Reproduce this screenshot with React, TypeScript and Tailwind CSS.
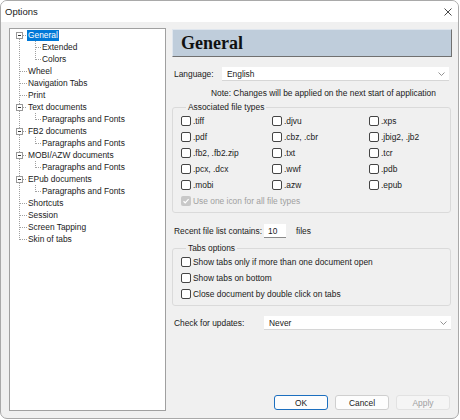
import React from "react";

type Row = { label: string; level: 0 | 1; expand?: boolean; last?: boolean; selected?: boolean };

const TREE: Row[] = [
  { label: "General", level: 0, expand: true, selected: true },
  { label: "Extended", level: 1 },
  { label: "Colors", level: 1, last: true },
  { label: "Wheel", level: 0 },
  { label: "Navigation Tabs", level: 0 },
  { label: "Print", level: 0 },
  { label: "Text documents", level: 0, expand: true },
  { label: "Paragraphs and Fonts", level: 1, last: true },
  { label: "FB2 documents", level: 0, expand: true },
  { label: "Paragraphs and Fonts", level: 1, last: true },
  { label: "MOBI/AZW documents", level: 0, expand: true },
  { label: "Paragraphs and Fonts", level: 1, last: true },
  { label: "EPub documents", level: 0, expand: true },
  { label: "Paragraphs and Fonts", level: 1, last: true },
  { label: "Shortcuts", level: 0 },
  { label: "Session", level: 0 },
  { label: "Screen Tapping", level: 0 },
  { label: "Skin of tabs", level: 0, last: true },
];

const FILE_TYPES = [
  ".tiff", ".djvu", ".xps",
  ".pdf", ".cbz, .cbr", ".jbig2, .jb2",
  ".fb2, .fb2.zip", ".txt", ".tcr",
  ".pcx, .dcx", ".wwf", ".pdb",
  ".mobi", ".azw", ".epub",
];

const DOT = { stroke: "#a0a0a0", strokeWidth: 1, strokeDasharray: "1 1" };

function Gutter({ row, first }: { row: Row; first: boolean }) {
  if (row.level === 1) {
    return (
      <svg width="31" height="12" className="shrink-0">
        <line x1="9.5" y1="0" x2="9.5" y2="12" {...DOT} />
        <line x1="25.5" y1="0" x2="25.5" y2={row.last ? 7 : 12} {...DOT} />
        <line x1="26" y1="6.5" x2="31" y2="6.5" {...DOT} />
      </svg>
    );
  }
  return (
    <svg width="17" height="12" className="shrink-0">
      {row.expand ? (
        <>
          {!first && <line x1="9.5" y1="0" x2="9.5" y2="3" {...DOT} />}
          <line x1="9.5" y1="10" x2="9.5" y2="12" {...DOT} />
          <rect x="6.5" y="3.5" width="6" height="6" fill="#fff" stroke="#999" />
          <line x1="8" y1="6.5" x2="11" y2="6.5" stroke="#333" />
          <line x1="13" y1="6.5" x2="17" y2="6.5" {...DOT} />
        </>
      ) : (
        <>
          <line x1="9.5" y1="0" x2="9.5" y2={row.last ? 7 : 12} {...DOT} />
          <line x1="10" y1="6.5" x2="17" y2="6.5" {...DOT} />
        </>
      )}
    </svg>
  );
}

function Check({ label, disabled, checked }: { label: string; disabled?: boolean; checked?: boolean }) {
  return (
    <div className="flex h-[16px] items-center whitespace-nowrap">
      <span
        className={
          disabled
            ? "flex h-[10px] w-[10px] shrink-0 items-center justify-center rounded-[2px] bg-[#c8c8c8]"
            : "h-[10px] w-[10px] shrink-0 rounded-[2px] border border-[#444] bg-white"
        }
      >
        {checked && (
          <svg width="8" height="8" viewBox="0 0 8 8">
            <path d="M1.5 4.2 L3.2 5.8 L6.6 2.2" fill="none" stroke="#fff" strokeWidth="1.2" />
          </svg>
        )}
      </span>
      <span className={disabled ? "ml-[2px] text-[#a0a0a0]" : "ml-[2px]"}>{label}</span>
    </div>
  );
}

function Select({ value, className }: { value: string; className: string }) {
  return (
    <div className={`flex h-[14px] items-center justify-between border-b border-[#d6d6d6] bg-white pl-[5px] pr-[4px] ${className}`}>
      <span>{value}</span>
      <svg width="7" height="4" viewBox="0 0 7 4">
        <path d="M0.5 0.5 L3.5 3.5 L6.5 0.5" fill="none" stroke="#777" strokeWidth="0.8" />
      </svg>
    </div>
  );
}

function Button({ children, primary, disabled }: { children: string; primary?: boolean; disabled?: boolean }) {
  const cls = primary
    ? "border-[#1c6fbf] bg-[#fdfdfd] text-[#1a1a1a]"
    : disabled
      ? "border-[#e2e2e2] bg-[#f5f5f5] text-[#a0a0a0]"
      : "border-[#cfcfcf] bg-[#fdfdfd] text-[#1a1a1a]";
  return (
    <div className={`flex h-[15px] w-[54px] items-center justify-center rounded-[3px] border ${cls}`}>{children}</div>
  );
}

export default function App() {
  return (
    <div
      className="h-[420px] w-[460px] bg-white text-[8.4px] leading-[12px] text-[#1a1a1a]"
      style={{ fontFamily: '"Liberation Sans", Arial, sans-serif' }}
    >
      <div className="flex h-[419px] w-[459px] flex-col overflow-hidden rounded-[7px] border border-[#a9a9a9] bg-[#f0f0f0]">
        <div className="flex h-[21px] shrink-0 items-center justify-between bg-white pl-[4px] pr-[6px]">
          <span className="text-[9.5px]">Options</span>
          <svg width="8" height="8" viewBox="0 0 8 8" className="mt-[1px]">
            <path d="M0.5 0.5 L7.5 7.5 M7.5 0.5 L0.5 7.5" stroke="#333" strokeWidth="0.9" />
          </svg>
        </div>

        <div className="flex flex-1 gap-[6px] pb-[7px] pl-[8px] pt-[6px]">
          <div className="w-[157px] shrink-0 border border-[#a0a0a0] bg-white">
            {TREE.map((row, i) => (
              <div key={i} className="flex h-[12px] items-center whitespace-nowrap">
                <Gutter row={row} first={i === 0} />
                <span
                  className={
                    row.selected
                      ? "bg-[#0078d7] px-[1px] leading-[11px] text-white"
                      : "px-[1px] leading-[11px]"
                  }
                >
                  {row.label}
                </span>
              </div>
            ))}
          </div>

          <div className="flex w-[280px] flex-col pt-[1px]">
            <div className="flex h-[28px] items-center border border-b-[#707070] border-l-[#dfe6ee] border-r-[#707070] border-t-[#dfe6ee] bg-[#bfcddb] pl-[8px]">
              <span
                className="text-[18px] font-bold text-[#111]"
                style={{ fontFamily: '"Liberation Serif", "Times New Roman", serif' }}
              >
                General
              </span>
            </div>

            <div className="mt-[10px] flex h-[14px] items-center whitespace-nowrap pl-[2px]">
              <span className="w-[48px] shrink-0">Language:</span>
              <Select value="English" className="w-[227px]" />
            </div>

            <div className="mt-[6px] whitespace-nowrap pl-[39px]">
              Note: Changes will be applied on the next start of application
            </div>

            <fieldset className="mr-[1px] mt-[2px] rounded-[3px] border border-[#dadada] pb-[3px] pl-[8px]">
              <legend className="ml-[5px] px-[2px]">Associated file types</legend>
              <div className="grid grid-cols-[91px_97px_1fr]">
                {FILE_TYPES.map((t) => (
                  <Check key={t} label={t} />
                ))}
              </div>
              <Check label="Use one icon for all file types" disabled checked />
            </fieldset>

            <div className="mt-[10px] flex h-[16px] items-center whitespace-nowrap pl-[2px]">
              <span>Recent file list contains:</span>
              <div className="ml-[2px] flex h-[14px] w-[22px] items-center border-b border-[#8a8a8a] bg-white pl-[4px]">10</div>
              <span className="ml-[10px]">files</span>
            </div>

            <fieldset className="mr-[1px] mt-[3px] rounded-[3px] border border-[#dadada] pb-[3px] pl-[8px]">
              <legend className="ml-[5px] px-[2px]">Tabs options</legend>
              <Check label="Show tabs only if more than one document open" />
              <Check label="Show tabs on bottom" />
              <Check label="Close document by double click on tabs" />
            </fieldset>

            <div className="mt-[10px] flex h-[14px] items-center whitespace-nowrap pl-[2px]">
              <span className="w-[90px] shrink-0">Check for updates:</span>
              <Select value="Never" className="w-[187px]" />
            </div>

            <div className="mb-[1px] mt-auto flex justify-end gap-[7px] pr-[2px]">
              <Button primary>OK</Button>
              <Button>Cancel</Button>
              <Button disabled>Apply</Button>
            </div>
          </div>
        </div>
      </div>
    </div>
  );
}
